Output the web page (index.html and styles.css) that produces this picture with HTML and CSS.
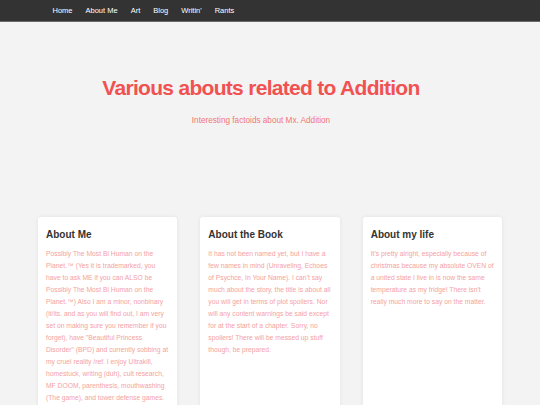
FILE: index.html
```html
<!DOCTYPE html>
<html lang="en">
<head>
    <meta charset="UTF-8">
    <meta name="viewport" content="width=device-width, initial-scale=1.0">
    <title>About</title>
    <link rel="stylesheet" href="styles.css">
</head>
<body>
    <nav>
        <ul>
            <li><a href="index.html">Home</a></li>
            <li><a href="about.html">About Me</a></li>
            <li><a href="art.html">Art</a></li>
            <li><a href="blog.html">Blog</a></li>
            <li><a href="writin.html">Writin'</a></li>
            <li><a href="rants.html">Rants</a></li>
        </ul>
    </nav>

    <header class="hero">
        <h1>Various abouts related to Addition</h1>
        <p>Interesting factoids about Mx. Addition</p>
    </header>

    <main class="cards">
        <section class="card">
            <h2>About Me</h2>
            <p>Possibly The Most Bi Human on the Planet.&trade; (Yes it is trademarked, you have to ask ME if you can ALSO be Possibly The Most Bi Human on the Planet.&trade;) Also I am a minor, nonbinary (it/its. and as you will find out, I am very set on making sure you remember if you forget), have "Beautiful Princess Disorder" (BPD) and currently sobbing at my cruel reality /ref. I enjoy Ultrakill, homestuck, writing (duh), cult research, MF DOOM, parenthesis, mouthwashing (The game), and tower defense games.</p>
        </section>
        <section class="card">
            <h2>About the Book</h2>
            <p>It has not been named yet, but I have a few names in mind (Unraveling, Echoes of Psychce, In Your Name). I can't say much about the story, the title is about all you will get in terms of plot spoilers. Nor will any content warnings be said except for at the start of a chapter. Sorry, no spoilers! There will be messed up stuff though, be prepared.</p>
        </section>
        <section class="card">
            <h2>About my life</h2>
            <p>It's pretty alright, especially because of christmas because my absolute OVEN of a united state I live in is now the same temperature as my fridge! There isn't really much more to say on the matter.</p>
        </section>
    </main>
</body>
</html>
```

FILE: styles.css
```css
body {
    font-family: "Liberation Sans", Arial, sans-serif;
    margin: 0;
    padding: 0;
    background-color: #f4f3f3;
}

nav {
    background-color: #333;
    border-bottom: 1px solid #6a6a6a;
}

nav ul {
    list-style-type: none;
    margin: 0;
    padding: 0 0 0 46px;
    display: flex;
}

nav ul li a {
    display: block;
    color: #fff;
    text-decoration: none;
    font-size: 7.5px;
    line-height: 21px;
    padding: 0 6.5px;
}

.hero {
    text-align: center;
    padding: 54px 38px 0 20px;
    height: 143px;
    box-sizing: border-box;
}

.hero h1 {
    color: #f05252;
    font-size: 21px;
    line-height: 24px;
    letter-spacing: -0.7px;
    margin: 0 0 16px;
}

.hero p {
    color: #f07676;
    font-size: 8.2px;
    line-height: 10px;
    margin: 0;
}

.cards {
    display: flex;
    gap: 23px;
    padding: 52px 38px 0;
}

.card {
    flex: 1;
    min-width: 0;
    background-color: white;
    border-radius: 3px;
    box-shadow: 0 0 4px rgba(0, 0, 0, 0.07);
    padding: 12px 8px 30px;
    min-height: 200px;
}

.card h2 {
    color: #333;
    font-size: 10px;
    line-height: 12px;
    margin: 0 0 7px;
}

.card p {
    color: #f5a2a2;
    font-size: 6.75px;
    line-height: 12px;
    margin: 0;
}
```
